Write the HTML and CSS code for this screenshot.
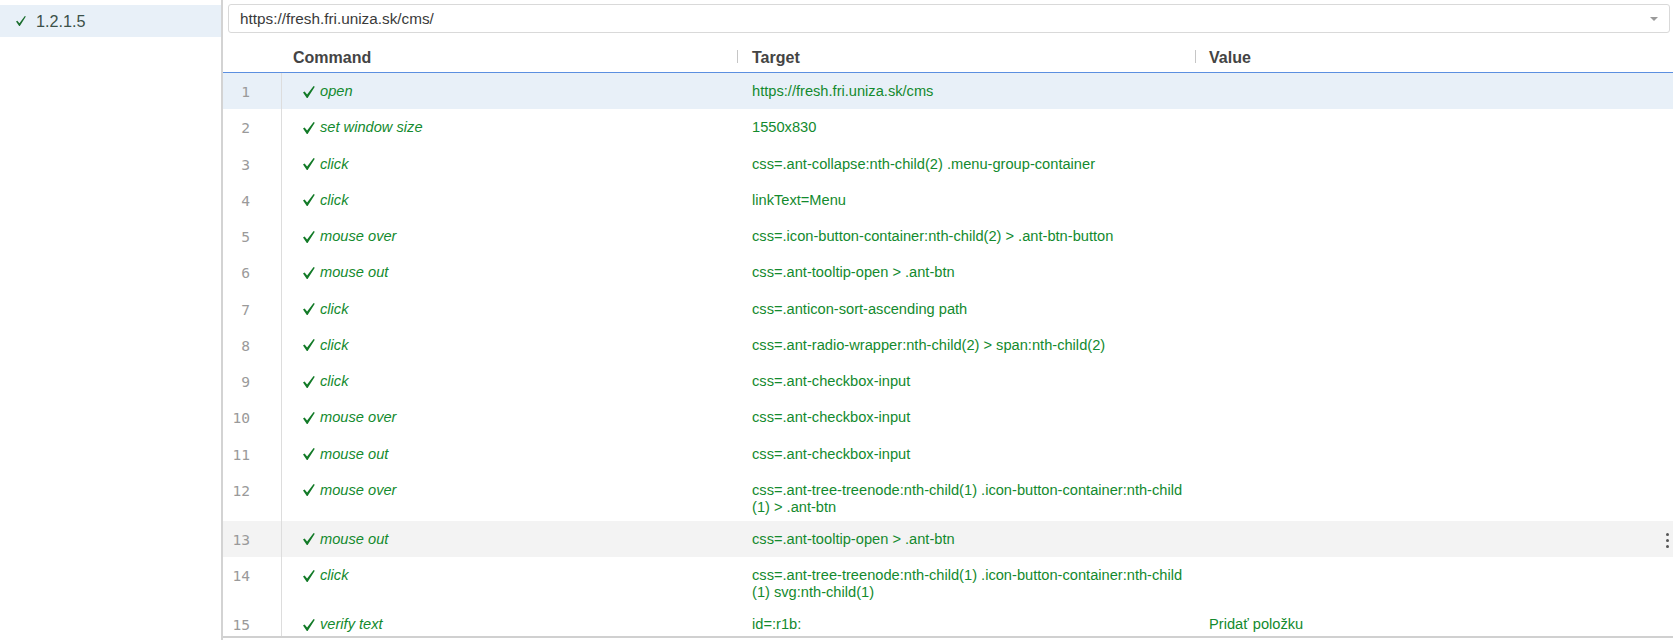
FILE: index.html
```html
<!DOCTYPE html>
<html lang="sk">
<head>
<meta charset="utf-8">
<title>Selenium IDE</title>
<link rel="stylesheet" href="styles.css">
</head>
<body>
<div class="app">
  <aside class="sidebar">
    <div class="suite-item is-selected">
      <svg class="side-check" viewBox="0 0 12 12"><polygon points="0,6.6 1.6,5.6 4.1,8.6 10.6,0 11.8,0.7 4.6,11.9 3.8,11.9"/></svg>
      <span>1.2.1.5</span>
    </div>
  </aside>
  <main class="editor">
    <div class="url-bar">
      <div class="url-input">
        <span class="url-text">https://fresh.fri.uniza.sk/cms/</span>
        <span class="caret"></span>
      </div>
    </div>
    <div class="cmd-header">
      <div class="h-index"></div>
      <div class="h-cell h-command">Command</div>
      <div class="h-cell h-target"><span class="sep"></span>Target</div>
      <div class="h-cell h-value"><span class="sep"></span>Value</div>
    </div>
    <div class="cmd-list">
      <div class="cmd-row is-selected">
        <div class="c-index">1</div>
        <div class="c-command"><svg class="check" viewBox="0 0 12 12"><polygon points="0,6.6 1.6,5.6 4.1,8.6 10.6,0 11.8,0.7 4.6,11.9 3.8,11.9"/></svg><span>open</span></div>
        <div class="c-target">https://fresh.fri.uniza.sk/cms</div>
        <div class="c-value"></div>
      </div>
      <div class="cmd-row">
        <div class="c-index">2</div>
        <div class="c-command"><svg class="check" viewBox="0 0 12 12"><polygon points="0,6.6 1.6,5.6 4.1,8.6 10.6,0 11.8,0.7 4.6,11.9 3.8,11.9"/></svg><span>set window size</span></div>
        <div class="c-target">1550x830</div>
        <div class="c-value"></div>
      </div>
      <div class="cmd-row">
        <div class="c-index">3</div>
        <div class="c-command"><svg class="check" viewBox="0 0 12 12"><polygon points="0,6.6 1.6,5.6 4.1,8.6 10.6,0 11.8,0.7 4.6,11.9 3.8,11.9"/></svg><span>click</span></div>
        <div class="c-target">css=.ant-collapse:nth-child(2) .menu-group-container</div>
        <div class="c-value"></div>
      </div>
      <div class="cmd-row">
        <div class="c-index">4</div>
        <div class="c-command"><svg class="check" viewBox="0 0 12 12"><polygon points="0,6.6 1.6,5.6 4.1,8.6 10.6,0 11.8,0.7 4.6,11.9 3.8,11.9"/></svg><span>click</span></div>
        <div class="c-target">linkText=Menu</div>
        <div class="c-value"></div>
      </div>
      <div class="cmd-row">
        <div class="c-index">5</div>
        <div class="c-command"><svg class="check" viewBox="0 0 12 12"><polygon points="0,6.6 1.6,5.6 4.1,8.6 10.6,0 11.8,0.7 4.6,11.9 3.8,11.9"/></svg><span>mouse over</span></div>
        <div class="c-target">css=.icon-button-container:nth-child(2) &gt; .ant-btn-button</div>
        <div class="c-value"></div>
      </div>
      <div class="cmd-row">
        <div class="c-index">6</div>
        <div class="c-command"><svg class="check" viewBox="0 0 12 12"><polygon points="0,6.6 1.6,5.6 4.1,8.6 10.6,0 11.8,0.7 4.6,11.9 3.8,11.9"/></svg><span>mouse out</span></div>
        <div class="c-target">css=.ant-tooltip-open &gt; .ant-btn</div>
        <div class="c-value"></div>
      </div>
      <div class="cmd-row">
        <div class="c-index">7</div>
        <div class="c-command"><svg class="check" viewBox="0 0 12 12"><polygon points="0,6.6 1.6,5.6 4.1,8.6 10.6,0 11.8,0.7 4.6,11.9 3.8,11.9"/></svg><span>click</span></div>
        <div class="c-target">css=.anticon-sort-ascending path</div>
        <div class="c-value"></div>
      </div>
      <div class="cmd-row">
        <div class="c-index">8</div>
        <div class="c-command"><svg class="check" viewBox="0 0 12 12"><polygon points="0,6.6 1.6,5.6 4.1,8.6 10.6,0 11.8,0.7 4.6,11.9 3.8,11.9"/></svg><span>click</span></div>
        <div class="c-target">css=.ant-radio-wrapper:nth-child(2) &gt; span:nth-child(2)</div>
        <div class="c-value"></div>
      </div>
      <div class="cmd-row">
        <div class="c-index">9</div>
        <div class="c-command"><svg class="check" viewBox="0 0 12 12"><polygon points="0,6.6 1.6,5.6 4.1,8.6 10.6,0 11.8,0.7 4.6,11.9 3.8,11.9"/></svg><span>click</span></div>
        <div class="c-target">css=.ant-checkbox-input</div>
        <div class="c-value"></div>
      </div>
      <div class="cmd-row">
        <div class="c-index">10</div>
        <div class="c-command"><svg class="check" viewBox="0 0 12 12"><polygon points="0,6.6 1.6,5.6 4.1,8.6 10.6,0 11.8,0.7 4.6,11.9 3.8,11.9"/></svg><span>mouse over</span></div>
        <div class="c-target">css=.ant-checkbox-input</div>
        <div class="c-value"></div>
      </div>
      <div class="cmd-row">
        <div class="c-index">11</div>
        <div class="c-command"><svg class="check" viewBox="0 0 12 12"><polygon points="0,6.6 1.6,5.6 4.1,8.6 10.6,0 11.8,0.7 4.6,11.9 3.8,11.9"/></svg><span>mouse out</span></div>
        <div class="c-target">css=.ant-checkbox-input</div>
        <div class="c-value"></div>
      </div>
      <div class="cmd-row">
        <div class="c-index">12</div>
        <div class="c-command"><svg class="check" viewBox="0 0 12 12"><polygon points="0,6.6 1.6,5.6 4.1,8.6 10.6,0 11.8,0.7 4.6,11.9 3.8,11.9"/></svg><span>mouse over</span></div>
        <div class="c-target">css=.ant-tree-treenode:nth-child(1) .icon-button-container:nth-child<br>(1) &gt; .ant-btn</div>
        <div class="c-value"></div>
      </div>
      <div class="cmd-row is-hover">
        <div class="c-index">13</div>
        <div class="c-command"><svg class="check" viewBox="0 0 12 12"><polygon points="0,6.6 1.6,5.6 4.1,8.6 10.6,0 11.8,0.7 4.6,11.9 3.8,11.9"/></svg><span>mouse out</span></div>
        <div class="c-target">css=.ant-tooltip-open &gt; .ant-btn</div>
        <div class="c-value c-menu"><span class="kebab"><i></i><i></i><i></i></span></div>
      </div>
      <div class="cmd-row">
        <div class="c-index">14</div>
        <div class="c-command"><svg class="check" viewBox="0 0 12 12"><polygon points="0,6.6 1.6,5.6 4.1,8.6 10.6,0 11.8,0.7 4.6,11.9 3.8,11.9"/></svg><span>click</span></div>
        <div class="c-target">css=.ant-tree-treenode:nth-child(1) .icon-button-container:nth-child<br>(1) svg:nth-child(1)</div>
        <div class="c-value"></div>
      </div>
      <div class="cmd-row">
        <div class="c-index">15</div>
        <div class="c-command"><svg class="check" viewBox="0 0 12 12"><polygon points="0,6.6 1.6,5.6 4.1,8.6 10.6,0 11.8,0.7 4.6,11.9 3.8,11.9"/></svg><span>verify text</span></div>
        <div class="c-target">id=:r1b:</div>
        <div class="c-value">Pridať položku</div>
      </div>
    </div>
  </main>
</div>
</body>
</html>
```

FILE: styles.css
```css
html, body {
  margin: 0;
  padding: 0;
  background: #ffffff;
  font-family: "Liberation Sans", Arial, sans-serif;
}

.app {
  display: flex;
  height: 640px;
  overflow: hidden;
}

/* ---------- sidebar ---------- */
.sidebar {
  width: 221px;
  flex: none;
  border-right: 2px solid #d3d3d3;
  padding-top: 5px;
  box-sizing: content-box;
}

.suite-item {
  height: 32px;
  display: flex;
  align-items: center;
  padding-left: 16px;
  font-size: 16.2px;
  color: #3b5049;
}

.suite-item.is-selected {
  background: #e8f0f8;
}

.side-check {
  width: 10px;
  height: 12px;
  fill: #1b6e2e;
  margin-right: 10px;
  margin-top: -1px;
}

/* ---------- editor ---------- */
.editor {
  flex: 1;
  min-width: 0;
  display: flex;
  flex-direction: column;
}

.url-bar {
  padding: 4px 3px 0 5px;
}

.url-input {
  height: 29px;
  box-sizing: border-box;
  border: 1px solid #d9d9d9;
  border-radius: 3px;
  display: flex;
  align-items: center;
  padding: 0 11px;
  font-size: 15.3px;
  color: #3a3a3a;
}

.caret {
  margin-left: auto;
  width: 0;
  height: 0;
  border-left: 4.5px solid transparent;
  border-right: 4.5px solid transparent;
  border-top: 4.5px solid #9a9a9a;
  margin-top: 1px;
}

.cmd-header {
  height: 40px;
  box-sizing: border-box;
  display: grid;
  grid-template-columns: 59px 455px 458px 1fr;
  align-items: end;
  padding-bottom: 5px;
  border-bottom: 1px solid #5b8fe0;
  font-weight: bold;
  font-size: 16px;
  line-height: 18px;
  color: #444444;
}

.h-command {
  padding-left: 11px;
}

.sep {
  display: inline-block;
  width: 1px;
  height: 13px;
  background: #c6c6c6;
}

.h-target .sep {
  margin-right: 14px;
}

.h-value .sep {
  margin-right: 13px;
}

.cmd-list {
  height: 563px;
  overflow: hidden;
  border-bottom: 2px solid #d0d0d0;
}

.cmd-row {
  display: grid;
  grid-template-columns: 59px 455px 458px 1fr;
  min-height: 36.27px;
  font-size: 14.65px;
  line-height: 17px;
  color: #138a2e;
}

.cmd-row > div {
  padding: 10px 0 5px;
  box-sizing: border-box;
}

.cmd-row.is-selected {
  background: #e8f0f8;
}

.cmd-row.is-hover {
  background: #f3f3f3;
}

.c-index {
  border-right: 1px solid #dddddd;
  text-align: right;
  padding-right: 31px !important;
  font-family: "DejaVu Sans Mono", "Liberation Mono", monospace;
  font-size: 14.6px;
  color: #9a9a9a;
}

.c-command {
  display: flex;
  align-items: flex-start;
  padding-left: 21px !important;
  font-style: italic;
}

.check {
  width: 12px;
  height: 12px;
  flex: none;
  fill: #127a27;
  margin-top: 2.5px;
  margin-right: 5px;
}

.c-target {
  padding-left: 15px !important;
}

.c-value {
  padding-left: 14px !important;
}

.c-menu {
  display: flex;
  justify-content: flex-end;
  padding-right: 4px !important;
}

.kebab {
  display: flex;
  flex-direction: column;
  gap: 3px;
  margin-top: 2px;
}

.kebab i {
  display: block;
  width: 3px;
  height: 3px;
  border-radius: 50%;
  background: #555555;
}
```
